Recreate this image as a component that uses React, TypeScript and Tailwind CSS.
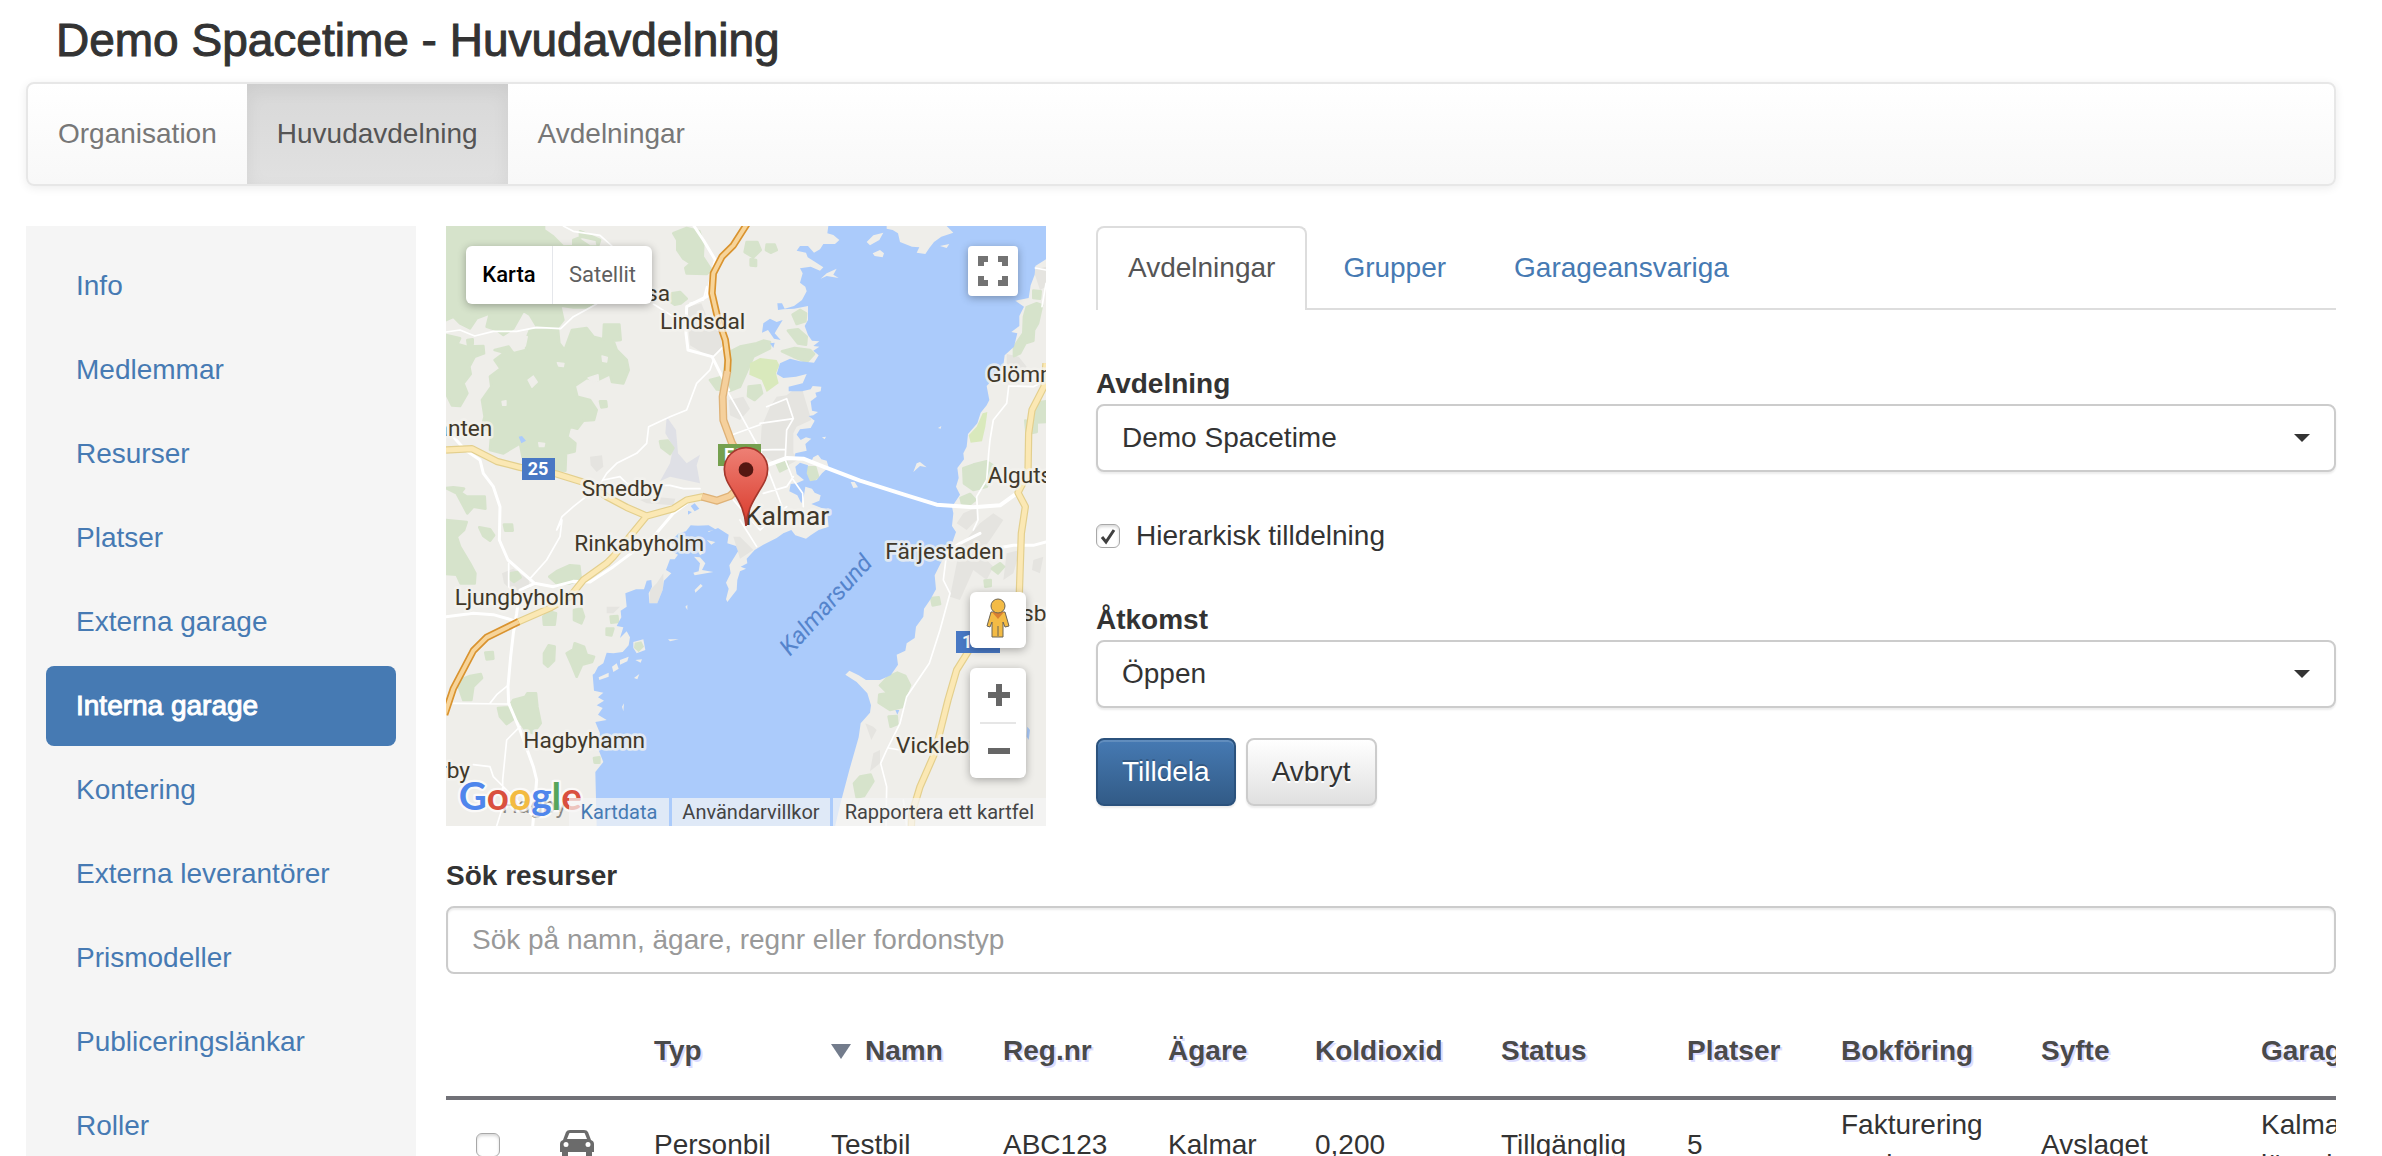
import { useState } from 'react';

interface Column {
  label: string;
  width: string;
  sorted?: boolean;
}

interface PlaceLabel {
  name: string;
  x: number;
  y: number;
  size?: number;
  anchor?: 'start' | 'end';
}

const navItems = ['Organisation', 'Huvudavdelning', 'Avdelningar'];

const sideItems = [
  'Info',
  'Medlemmar',
  'Resurser',
  'Platser',
  'Externa garage',
  'Interna garage',
  'Kontering',
  'Externa leverantörer',
  'Prismodeller',
  'Publiceringslänkar',
  'Roller',
];

const tabs = ['Avdelningar', 'Grupper', 'Garageansvariga'];

const columns: Column[] = [
  { label: 'Typ', width: 'w-[177px]' },
  { label: 'Namn', width: 'w-[172px]', sorted: true },
  { label: 'Reg.nr', width: 'w-[165px]' },
  { label: 'Ägare', width: 'w-[147px]' },
  { label: 'Koldioxid', width: 'w-[186px]' },
  { label: 'Status', width: 'w-[186px]' },
  { label: 'Platser', width: 'w-[154px]' },
  { label: 'Bokföring', width: 'w-[200px]' },
  { label: 'Syfte', width: 'w-[220px]' },
  { label: 'Garage', width: 'w-[160px]' },
];

const rows = [
  ['Personbil', 'Testbil', 'ABC123', 'Kalmar', '0,200', 'Tillgänglig', '5', 'Fakturering avgiven', 'Avslaget', 'Kalmar länssjukhus'],
];

const places: PlaceLabel[] = [
  { name: 'sa', x: 690, y: 243, anchor: 'end' },
  { name: 'Lindsdal', x: 660, y: 327 },
  { name: 'anten', x: 157, y: 648, anchor: 'end' },
  { name: 'Smedby', x: 425, y: 828 },
  { name: 'Kalmar', x: 914, y: 914, size: 80 },
  { name: 'Rinkabyholm', x: 403, y: 994 },
  { name: 'Ljungbyholm', x: 44, y: 1155 },
  { name: 'Hagbyhamn', x: 250, y: 1585 },
  { name: 'rby', x: 90, y: 1673, anchor: 'end' },
  { name: 'Glömminge', x: 1639, y: 487 },
  { name: 'Algutsrum', x: 1643, y: 790 },
  { name: 'Färjestaden', x: 1336, y: 1018 },
  { name: 'Vickleby', x: 1368, y: 1600 },
  { name: 'sby', x: 1746, y: 1203 },
];

const water =
  'M1165 18 L1162 40 L1180 45 L1198 60 L1185 72 L1150 72 L1140 88 L1122 98 L1104 78 L1080 78 L1070 92 L1098 98 L1103 112 L1122 124 L1150 142 L1140 152 L1112 140 L1080 145 L1088 160 L1080 188 L1096 200 L1100 214 L1086 240 L1062 258 L1034 266 L1026 250 L1012 250 L1014 270 L1030 268 L1062 266 L1104 258 L1104 300 L1094 318 L1104 345 L1116 362 L1138 364 L1120 378 L1138 380 L1120 392 L1136 406 L1122 428 L1080 424 L1050 416 L1020 430 L1010 462 L1030 474 L1068 470 L1100 462 L1088 490 L1046 500 L1046 514 L1086 514 L1112 508 L1118 498 L1144 500 L1142 514 L1126 518 L1130 530 L1112 544 L1116 572 L1134 576 L1120 586 L1106 588 L1124 602 L1112 624 L1080 628 L1070 644 L1082 660 L1098 652 L1114 656 L1096 672 L1100 692 L1066 700 L1064 712 L1090 716 L1112 728 L1120 712 L1134 704 L1144 718 L1160 722 L1166 742 L1146 760 L1130 780 L1110 784 L1100 760 L1104 736 L1080 728 L1066 740 L1070 762 L1092 780 L1070 790 L1052 792 L1048 814 L1072 826 L1084 850 L1092 826 L1096 800 L1116 806 L1124 818 L1142 826 L1138 842 L1114 852 L1160 870 L1166 920 L1136 930 L1112 946 L1098 956 L1066 946 L1054 930 L1030 940 L1010 954 L970 974 L944 990 L920 1016 L922 1030 L902 1040 L918 1046 L900 1054 L892 1080 L890 1110 L862 1146 L858 1138 L866 1106 L858 1088 L872 1060 L868 1036 L894 994 L888 978 L862 970 L866 944 L834 924 L806 936 L796 920 L752 916 L738 934 L716 940 L690 966 L706 974 L688 990 L714 1004 L704 1018 L690 1018 L678 1050 L694 1060 L672 1082 L668 1110 L652 1150 L628 1150 L626 1120 L636 1100 L634 1080 L620 1082 L612 1108 L588 1108 L556 1120 L560 1160 L542 1172 L544 1192 L530 1218 L550 1222 L540 1254 L560 1234 L570 1252 L566 1276 L548 1296 L520 1300 L500 1298 L490 1330 L474 1340 L464 1360 L458 1364 L462 1412 L490 1418 L474 1432 L492 1442 L470 1456 L488 1464 L474 1484 L500 1500 L466 1506 L480 1540 L472 1580 L490 1626 L466 1656 L470 1820 L1185 1820 L1200 1756 L1228 1650 L1256 1552 L1262 1510 L1290 1478 L1293 1456 L1282 1420 L1250 1386 L1216 1364 L1228 1352 L1256 1366 L1278 1380 L1320 1380 L1352 1366 L1374 1334 L1370 1304 L1396 1292 L1400 1270 L1424 1254 L1428 1220 L1450 1190 L1452 1166 L1470 1140 L1488 1108 L1484 1066 L1502 1030 L1520 1000 L1536 970 L1548 936 L1536 918 L1540 880 L1536 860 L1560 824 L1548 800 L1556 774 L1552 744 L1572 718 L1570 700 L1580 680 L1584 642 L1612 610 L1622 578 L1640 556 L1648 540 L1640 498 L1662 474 L1690 436 L1694 406 L1722 380 L1732 340 L1714 336 L1738 318 L1738 288 L1752 260 L1726 242 L1766 234 L1772 196 L1784 164 L1786 138 L1818 118 L1818 18 L1520 18 L1540 38 L1504 50 L1482 66 L1468 84 L1456 102 L1430 98 L1438 82 L1416 80 L1380 66 L1374 40 L1358 30 L1340 26 L1340 18 Z';

const forest =
  'M18 18 L312 18 L312 30 L340 50 L370 80 L400 78 L410 70 L440 90 L470 90 L480 60 L440 42 L420 34 L420 60 L450 80 L460 250 L440 262 L400 262 L360 256 L370 300 L350 325 L290 318 L270 285 L250 272 L240 290 L220 325 L190 345 L170 330 L140 320 L150 280 L110 295 L90 325 L60 310 L40 290 L18 300 Z M400 60 L425 50 L470 60 L474 80 L400 80 Z M18 345 L60 355 L52 372 L80 380 L130 378 L132 400 L104 410 L88 440 L92 462 L70 490 L82 520 L60 558 L36 556 L18 520 Z M270 330 L354 330 L358 370 L374 390 L396 330 L440 324 L460 350 L490 358 L492 314 L538 314 L542 360 L520 362 L530 390 L560 420 L566 450 L550 490 L516 486 L510 462 L470 482 L440 474 L404 498 L412 530 L450 540 L470 570 L462 600 L430 602 L412 626 L390 620 L382 650 L406 670 L404 694 L378 700 L376 752 L344 750 L344 712 L248 712 L240 670 L190 700 L150 690 L154 640 L126 620 L134 590 L126 540 L154 500 L150 470 L182 446 L164 420 L194 398 L164 390 L206 380 L220 400 L258 390 L262 350 Z M250 690 L280 676 L320 700 L320 714 L262 714 Z M18 804 L50 820 L82 880 L100 860 L136 866 L134 830 L96 830 L80 830 L62 818 L72 806 L40 802 Z M18 900 L80 906 L72 930 L50 950 L60 980 L90 1030 L106 1060 L104 1090 L62 1090 L50 1064 L18 1062 Z M118 922 L150 928 L162 946 L150 962 L130 948 Z M192 914 L216 914 L218 932 L196 932 Z M700 40 L740 24 L778 34 L790 70 L788 110 L814 150 L800 162 L740 160 L736 144 L752 130 L730 116 L712 90 L712 60 Z M696 220 L720 216 L740 236 L722 250 L704 254 L684 240 Z M920 66 L952 66 L962 90 L940 112 L914 96 Z M980 74 L1004 74 L1010 90 L992 98 L978 90 Z M932 118 L948 120 L948 138 L932 136 Z M810 480 L850 470 L860 400 L900 380 L950 370 L970 362 L990 366 L990 385 L940 410 L900 500 L870 512 L830 508 Z M926 500 L960 496 L966 520 L944 540 L924 528 Z M1058 284 L1080 270 L1098 280 L1096 304 L1070 312 Z M1044 332 L1074 328 L1100 350 L1098 374 L1074 370 Z M1026 394 L1064 384 L1110 390 L1122 402 L1100 426 L1060 410 Z M1104 742 L1126 742 L1134 770 L1116 784 L1100 772 Z M1008 726 L1040 726 L1044 742 L1020 754 Z M1760 262 L1790 250 L1806 256 L1794 310 L1782 330 L1780 362 L1756 370 L1740 400 L1722 408 L1722 380 L1750 340 L1752 290 Z M1780 212 L1802 214 L1800 236 L1780 234 Z M1776 570 L1790 548 L1818 544 L1818 606 L1776 608 Z M1756 602 L1790 610 L1790 636 L1760 642 Z M1570 745 L1600 734 L1640 724 L1664 740 L1640 800 L1600 810 L1572 790 Z M1562 834 L1590 822 L1606 840 L1586 856 L1566 850 Z M1656 1046 L1680 1030 L1692 1040 L1674 1060 Z M1634 1082 L1652 1080 L1652 1098 L1636 1100 Z M1474 1134 L1496 1132 L1500 1152 L1478 1156 Z M1320 1396 L1345 1370 L1372 1358 L1396 1368 L1410 1396 L1396 1430 L1390 1460 L1350 1470 L1316 1448 L1318 1424 L1344 1420 Z M1346 1490 L1370 1488 L1372 1512 L1352 1520 Z M1242 1690 L1260 1670 L1292 1664 L1300 1684 L1272 1728 L1250 1732 Z M328 1070 L350 1054 L390 1036 L418 1038 L422 1076 L390 1090 L350 1090 Z M212 1060 L232 1056 L242 1072 L222 1086 L210 1076 Z M310 1190 L326 1174 L348 1180 L344 1214 L312 1214 Z M402 1170 L424 1166 L432 1190 L424 1210 L402 1200 Z M312 1300 L326 1276 L344 1280 L342 1322 L324 1340 L312 1330 Z M380 1300 L400 1288 L404 1270 L432 1280 L440 1304 L462 1310 L456 1326 L426 1334 L410 1370 L396 1336 Z M136 1298 L158 1296 L160 1316 L140 1318 Z M60 1380 L90 1368 L122 1362 L126 1374 L100 1400 L94 1440 L70 1440 L56 1400 Z M174 1464 L206 1462 L220 1440 L256 1430 L262 1420 L288 1420 L292 1460 L302 1510 L280 1540 L256 1530 L230 1490 L200 1512 L180 1490 Z M512 1190 L532 1188 L534 1206 L514 1208 Z M500 1226 L520 1226 L514 1246 L500 1244 Z M462 1614 L478 1612 L478 1628 L464 1628 Z M660 664 L684 662 L700 684 L690 702 L664 682 Z M480 544 L498 544 L500 560 L484 562 Z M82 360 L98 358 L98 372 L84 374 Z';

const clearings =
  'M264 480 L280 468 L292 486 L276 502 Z M186 544 L198 542 L198 556 L188 556 Z M444 474 L474 464 L476 482 L460 488 Z M352 428 L372 430 L370 440 L356 438 Z M486 408 L502 412 L500 426 L488 424 Z M296 668 L314 670 L312 680 L298 680 Z M230 345 L262 350 L256 378 L228 380 Z';

const urban =
  'M740 262 L784 250 L800 290 L840 330 L846 380 L820 410 L790 400 L750 376 Z M1010 530 L1040 526 L1086 490 L1090 520 L1114 600 L1070 620 L1060 640 L1060 700 L1080 716 L1036 740 L990 720 L960 700 L965 620 L990 560 Z M866 540 L910 530 L930 566 L900 600 L870 586 Z M450 710 L486 706 L490 740 L470 756 L452 736 Z M600 840 L640 830 L706 836 L700 856 L620 850 Z M186 1060 L220 1046 L266 1080 L270 1104 L220 1116 L192 1090 Z M630 1110 L650 1090 L670 1060 L670 1104 L652 1150 L628 1150 Z M1560 980 L1620 910 L1660 880 L1690 900 L1650 960 L1620 1000 L1660 1040 L1640 1080 L1600 1050 L1560 1140 L1530 1130 Z M1700 1000 L1740 990 L1720 1060 L1690 1080 Z M1700 402 L1736 410 L1760 440 L1740 490 L1696 490 L1700 440 Z M1570 880 L1610 862 L1610 900 L1580 930 L1550 910 Z M1780 150 L1818 140 L1818 200 L1800 210 Z M1780 1020 L1810 1010 L1800 1060 L1776 1050 Z M1300 1600 L1320 1590 L1320 1630 L1290 1654 Z M1276 1510 L1300 1520 L1310 1530 L1294 1560 Z M500 1160 L540 1160 L520 1180 L500 1180 Z M880 950 L900 950 L940 990 L900 1016 Z';

const airfield = 'M680 590 L708 630 L714 700 L740 730 L780 704 L770 736 L780 790 L690 770 L660 784 L690 730 L700 680 L676 640 Z';

const islets =
  'M1280 66 L1300 46 L1330 38 L1318 60 L1290 76 Z M1298 100 L1320 90 L1332 100 L1328 112 L1304 108 Z M1160 160 L1190 146 L1180 164 L1196 174 L1160 168 L1142 176 Z M1430 730 L1440 726 L1460 742 L1440 738 L1420 756 Z M1232 786 L1244 786 L1254 802 L1240 804 Z M1494 624 L1504 618 L1502 626 Z M1146 652 L1158 650 L1154 658 Z M1110 602 L1122 600 L1118 612 Z M580 1266 L610 1258 L616 1290 L590 1300 L580 1284 Z M476 1372 L506 1358 L506 1370 L478 1380 Z M516 1340 L530 1330 L536 1346 L520 1356 Z M540 1320 L566 1310 L562 1324 L540 1334 Z M582 1374 L598 1362 L592 1378 Z M684 1258 L716 1258 L690 1264 Z M760 1058 L776 1054 L780 1030 L762 1010 L780 1012 L796 1030 L786 1050 L820 1056 L764 1066 Z M764 1110 L782 1092 L788 1098 L766 1118 Z M736 1160 L742 1154 L742 1170 Z M546 1460 L552 1450 L550 1474 Z M586 1320 L606 1318 L602 1328 Z M800 960 L826 966 L814 974 Z M1500 78 L1528 72 L1520 84 Z M770 980 L790 1000 L780 1006 Z';

const ponds =
  'M970 310 L990 296 L1010 306 L1028 300 L1012 326 L1004 340 L1022 360 L1002 356 L984 330 L966 338 Z M990 370 L1004 368 L1000 384 Z M752 858 L764 850 L778 866 L764 874 Z M744 872 L756 876 L744 884 Z M752 918 L806 916 L830 930 L752 940 Z M236 650 L246 648 L258 662 L244 670 Z M1366 1470 L1378 1470 L1372 1484 Z M1762 1520 L1770 1530 L1766 1560 L1760 1550 Z';

const yellowRoads =
  'M18 690 L96 686 L170 724 L240 742 L350 762 L440 790 L500 830 L560 862 L620 888 L700 866 L740 840 L790 830 M620 888 L520 1010 L500 1030 L430 1080 L390 1130 L330 1164 L234 1206 M1818 430 L1812 500 L1776 570 L1766 640 L1764 760 L1734 818 L1756 860 L1744 940 L1742 1000 L1738 1120 M1600 1270 L1550 1350 L1524 1440 L1504 1520 L1484 1600 L1440 1700 L1416 1780 L1414 1820';

const motorway = 'M922 10 L880 76 L846 110 L820 160 L816 220 L832 290 L856 360 L864 420 L862 460 M236 1205 L140 1252 L100 1292 L40 1406 L14 1484';

const motorwayCity = 'M862 454 L848 530 L850 600 L876 670 L910 730 M786 830 L830 842 L870 828 L900 800';

const linkClass = 'text-[#467ab3] hover:underline';
const controlClass = 'absolute bg-white shadow-[0_2px_8px_rgba(0,0,0,0.3)]';
const fieldClass =
  'block h-[68px] w-full rounded-lg border-2 border-[#cccccc] bg-white px-6 text-[28px] leading-10 text-[#333333] outline-none';

function MapDrawing() {
  return (
    <svg viewBox="18 18 1800 1800" className="block h-full w-full" aria-hidden="true" fontFamily="Roboto, sans-serif">
      <defs>
        <linearGradient id="pin" x1="0" y1="0" x2="0" y2="1">
          <stop offset="0" stopColor="#ee8075" />
          <stop offset="1" stopColor="#d93a2b" />
        </linearGradient>
      </defs>
      <rect x="18" y="18" width="1800" height="1800" fill="#efeeea" />
      <path d={urban} fill="#e5e4e0" />
      <path d={airfield} fill="#dfe0e6" />
      <path d={forest} fill="#d6e3cb" stroke="#d6e3cb" strokeWidth="8" strokeLinejoin="round" />
      <path d={clearings} fill="#efeeea" stroke="#efeeea" strokeWidth="4" strokeLinejoin="round" />
      <path
        d="M930 430 L960 414 L1010 420 L1018 436 L1008 460 L1016 490 L980 516 L965 480 L928 464 Z M1610 620 L1628 580 L1642 576 L1636 620 L1626 664 L1592 668 L1586 646 Z"
        fill="#d9e9bc"
      />
      <path d={water} fill="#abcbfb" />
      <path d={ponds} fill="#abcbfb" />
      <path d={islets} fill="#efeeea" />
      <path d="M584 1268 L604 1264 L612 1280 L596 1296 L582 1284 Z" fill="#d6e3cb" />

      {/* minor roads */}
      <g fill="none" stroke="#ffffff" strokeLinejoin="round" strokeLinecap="round">
        <path
          strokeWidth="5"
          d="M370 18 L400 34 L480 46 L516 78 M18 336 L60 330 L104 348 L160 334 L230 334 L290 322 L362 326 L400 290 L470 252 M820 420 L810 450 L770 490 L740 570 L690 590 L626 620 L620 670 L590 700 L530 730 L500 760 L476 800 L400 860 L366 890 L350 930 L366 900 L360 950 L320 1020 L270 1076 M490 780 L540 770 L560 790 L620 796 L690 796 L730 806 L780 806 M860 510 L900 580 L960 690 L1000 790 L1030 870 M960 614 L860 650 M980 560 L1040 536 L1060 596 L1040 630 L1036 710 M960 610 L1060 596 M960 690 L1036 688 M970 820 L1040 800 L1060 770 M1036 720 L1060 780 L1088 820 L1090 860 M750 250 L790 240 L800 200 M640 252 L700 290 M860 370 L820 410 M206 1030 L206 1100 L230 1130 M40 1450 L210 1452 M150 1450 L170 1424 L204 1396 M240 1520 L200 1560 L188 1680 L188 1760 L170 1818 M100 1634 L150 1640 L160 1670 L230 1740 L280 1790 M1706 500 L1700 550 L1660 600 L1650 660 L1646 700 L1640 780 L1610 830 L1614 900 L1600 930 M1706 498 L1780 500 L1800 490 M1520 1000 L1510 1080 L1530 1120 L1500 1230 L1468 1330 L1400 1430 L1380 1510 L1340 1590 L1322 1630 L1340 1700 L1338 1818 M1345 1584 L1380 1590 M1806 260 L1818 190 M1786 144 L1818 150 M1390 1740 L1400 1818 M900 900 L950 980 M880 840 L960 930 L1040 860"
        />
        <path
          strokeWidth="9"
          d="M762 18 L790 60 L826 120 L800 230 L740 260 L738 340 L744 390 L816 410 L866 510 M30 640 L76 690 L120 720 L130 760 L160 800 L180 860 L178 960 L204 1020 L284 1090 L340 1100 L400 1084 L450 1086 L520 1040 L640 950 L700 880 L740 850 M284 1090 L240 1110 L230 1180 L220 1240 L212 1310 L204 1400 L206 1450 L240 1530 L280 1640 L290 1680 L278 1820 M18 1190 L100 1180 L160 1184 L230 1204 M1520 998 L1560 970 L1620 940 M1640 990 L1720 976 L1780 976 L1818 966"
        />
        <path strokeWidth="12" d="M980 736 L1040 714 L1090 716 L1150 740 L1260 782 L1400 826 L1490 854 L1600 862 L1680 856 L1730 820" />
      </g>

      {/* larger roads, casing first */}
      <g fill="none" strokeLinejoin="round">
        <path stroke="#e3cf8d" strokeWidth="22" d={yellowRoads} />
        <path stroke="#fbe8b4" strokeWidth="15" d={yellowRoads} />
        <path stroke="#d9932f" strokeWidth="22" d={motorway} />
        <path stroke="#dfb277" strokeWidth="24" d={motorwayCity} />
        <path stroke="#f7d499" strokeWidth="12" d={motorway} />
        <path stroke="#f5d09c" strokeWidth="16" d={motorwayCity} />
      </g>

      {/* road shields */}
      <g fontSize="54" fontWeight="700" fill="#ffffff">
        <rect x="246" y="714" width="99" height="66" fill="#4878c4" />
        <text x="263" y="766">25</text>
        <rect x="834" y="672" width="129" height="66" fill="#75a04f" />
        <text x="852" y="724">E22</text>
        <rect x="1548" y="1233" width="132" height="66" fill="#4878c4" />
        <text x="1566" y="1285">136</text>
      </g>

      <text x="185" y="1780" fontSize="68" fill="#8b8883">Hagby</text>
      <g fill="#40382a" stroke="#f4f3ef" strokeOpacity="0.75" strokeWidth="16" strokeLinejoin="round" paintOrder="stroke">
        {places.map(p => (
          <text key={p.name} x={p.x} y={p.y} fontSize={p.size ?? 68} textAnchor={p.anchor ?? 'start'}>
            {p.name}
          </text>
        ))}
      </g>
      <text x="1050" y="1310" fontSize="72" fontStyle="italic" fill="#5584cc" transform="rotate(-48 1050 1310)">
        Kalmarsund
      </text>

      <path
        d="M918 918 C914 868 896 842 878 812 C864 790 853 772 853 748 A65 65 0 0 1 983 748 C983 772 972 790 958 812 C940 842 922 868 918 918 Z"
        fill="url(#pin)"
        stroke="#a4372c"
        strokeWidth="5"
      />
      <circle cx="918" cy="749" r="22" fill="#541712" />

      <text x="56" y="1769" fontFamily="Lato, sans-serif" fontSize="116" fontWeight="700" stroke="#ffffff" strokeOpacity="0.7" strokeWidth="14" strokeLinejoin="round" paintOrder="stroke">
        <tspan fill="#4f86ec">G</tspan>
        <tspan fill="#d9503f">o</tspan>
        <tspan fill="#f3bb41">o</tspan>
        <tspan fill="#4f86ec">g</tspan>
        <tspan fill="#57a55a">l</tspan>
        <tspan fill="#d9503f">e</tspan>
      </text>
    </svg>
  );
}

function GarageMap() {
  return (
    <div className="relative h-[600px] w-[600px] shrink-0 overflow-hidden font-[Roboto,sans-serif]">
      <MapDrawing />
      <div className={`${controlClass} left-5 top-5 flex h-[58px] rounded-md text-[22px]`}>
        <button type="button" className="w-[86px] font-medium text-black">Karta</button>
        <button type="button" className="w-[100px] border-l border-gray-200 text-[#5f5f5f]">Satellit</button>
      </div>
      <button type="button" aria-label="Helskärm" className={`${controlClass} right-7 top-5 h-[50px] w-[50px] rounded-sm`}>
        <svg viewBox="0 0 50 50" fill="none" stroke="#737373" strokeWidth="6">
          <path d="M13 20 V13 H20 M30 13 H37 V20 M37 30 V37 H30 M20 37 H13 V30" />
        </svg>
      </button>
      <button type="button" aria-label="Street View" className={`${controlClass} right-5 top-[366px] h-14 w-14 rounded-md`}>
        <svg viewBox="0 0 56 56" fill="#f3bb45" stroke="#6b6455" strokeWidth="1">
          <path d="M21 20 H35 L39 34 L35 35 L33 30 V45 H22 V30 L20 35 L17 34 Z" strokeLinejoin="round" />
          <path d="M22 20 H34 L28 27 Z" fill="#d98032" stroke="none" />
          <path d="M28 34 V44" />
          <circle cx="28" cy="14" r="7" />
        </svg>
      </button>
      <div className={`${controlClass} right-5 top-[442px] flex w-14 flex-col items-center rounded-md`}>
        <button type="button" aria-label="Zooma in" className="h-[54px] w-14">
          <svg viewBox="0 0 56 54" stroke="#666666" strokeWidth="6">
            <path d="M18 27 H40 M29 16 V38" />
          </svg>
        </button>
        <div className="h-0.5 w-9 bg-[#e6e6e6]" />
        <button type="button" aria-label="Zooma ut" className="h-[54px] w-14">
          <svg viewBox="0 0 56 54" stroke="#666666" strokeWidth="6">
            <path d="M18 27 H40" />
          </svg>
        </button>
      </div>
      <div className="absolute bottom-0 right-0 flex gap-[3px] whitespace-nowrap text-[20px] leading-7 text-[#444444]">
        <a href="#kartdata" className="bg-[#f5f5f5]/70 px-3 text-[#467ab3]">Kartdata</a>
        <a href="#villkor" className="bg-[#f5f5f5]/70 px-[10px]">Användarvillkor</a>
        <a href="#kartfel" className="bg-[#f5f5f5]/70 px-3">Rapportera ett kartfel</a>
      </div>
    </div>
  );
}

function SelectField({ id, label, options }: { id: string; label: string; options: string[] }) {
  return (
    <div>
      <label htmlFor={id} className="block font-bold">{label}</label>
      <div className="relative">
        <select id={id} className={`${fieldClass} appearance-none shadow-[0_2px_2px_rgba(0,0,0,0.08)]`}>
          {options.map(o => (
            <option key={o}>{o}</option>
          ))}
        </select>
        <svg viewBox="0 0 16 8" className="pointer-events-none absolute right-[26px] top-[30px] h-2 w-4">
          <path d="M0 0 H16 L8 8 Z" fill="#333333" />
        </svg>
      </div>
    </div>
  );
}

function Checkbox({ id, checked, onChange, label }: { id: string; checked: boolean; onChange: (v: boolean) => void; label?: string }) {
  return (
    <span className="relative block h-6 w-6 shrink-0">
      <input
        id={id}
        type="checkbox"
        aria-label={label}
        checked={checked}
        onChange={e => onChange(e.target.checked)}
        className="block h-6 w-6 appearance-none rounded-[6px] border border-[#a8a8a8] bg-white shadow-[inset_0_2px_3px_rgba(0,0,0,0.15)]"
      />
      {checked && (
        <svg viewBox="0 0 24 24" className="pointer-events-none absolute inset-0" fill="none" stroke="#404040" strokeWidth="3">
          <path d="M6 13 L10 18 L18 6" />
        </svg>
      )}
    </span>
  );
}

function CarIcon() {
  return (
    <svg viewBox="0 0 34 30" className="block h-[30px] w-[34px]" fill="#6b6b6b">
      <path
        fillRule="evenodd"
        d="M10 0 H24 Q27 0 28 2 L31 10 Q34 11 34 14 V22 H32 V27 Q32 30 29 30 Q26 30 26 27 V22 H8 V27 Q8 30 5 30 Q2 30 2 27 V22 H0 V14 Q0 11 3 10 L6 2 Q7 0 10 0 Z M10 3 Q9 3 9 4 L7 9 H27 L25 4 Q25 3 24 3 Z M6 12 A2 2 0 1 0 6 17 A2 2 0 1 0 6 12 Z M28 12 A2 2 0 1 0 28 17 A2 2 0 1 0 28 12 Z"
      />
    </svg>
  );
}

export default function App() {
  const [hierarchical, setHierarchical] = useState(true);
  const [selected, setSelected] = useState(false);
  const [query, setQuery] = useState('');

  return (
    <div className="flex h-screen flex-col overflow-hidden bg-white pl-[26px] pr-[46px] font-['Liberation_Sans',Arial,sans-serif] text-[28px] leading-10 text-[#333333]">
      <h1 className="mb-[18px] mt-4 pl-[30px] text-[46px] leading-[48px] [-webkit-text-stroke:1px_#333333]">
        Demo Spacetime - Huvudavdelning
      </h1>

      <nav className="flex shrink-0 rounded-lg border-2 border-[#e7e7e7] bg-linear-to-b from-white to-[#f8f8f8] shadow-[0_2px_10px_rgba(0,0,0,0.08)]">
        {navItems.map(item => (
          <a
            key={item}
            href={`#${item.toLowerCase()}`}
            className={
              item === 'Huvudavdelning'
                ? 'bg-linear-to-b from-[#d8d8d8] to-[#e1e1e1] px-[30px] py-[30px] text-[#555555] shadow-[inset_0_6px_18px_rgba(0,0,0,0.06)]'
                : 'px-[30px] py-[30px] text-[#777777]'
            }
          >
            {item}
          </a>
        ))}
      </nav>

      <div className="mt-10 flex min-h-0 flex-1 gap-[30px]">
        <aside className="w-[390px] shrink-0 overflow-hidden bg-[#f5f5f5] p-5">
          <ul className="space-y-1">
            {sideItems.map(item => (
              <li key={item}>
                <a
                  href={`#${item.toLowerCase()}`}
                  className={
                    item === 'Interna garage'
                      ? 'block rounded-lg bg-[#467ab3] px-[30px] py-5 text-white [-webkit-text-stroke:1px_white]'
                      : 'block px-[30px] py-5 text-[#467ab3]'
                  }
                >
                  {item}
                </a>
              </li>
            ))}
          </ul>
        </aside>

        <main className="min-w-0 flex-1">
          <div className="flex gap-[50px]">
            <GarageMap />

            <div className="min-w-0 flex-1">
              <div role="tablist" className="flex gap-1 border-b-2 border-[#dddddd]">
                {tabs.map((tab, i) => (
                  <button
                    key={tab}
                    type="button"
                    role="tab"
                    aria-selected={i === 0}
                    className={
                      i === 0
                        ? '-mb-0.5 rounded-t-lg border-2 border-b-0 border-[#dddddd] bg-white px-[30px] pb-[22px] pt-5 text-[#555555]'
                        : `border-2 border-b-0 border-transparent px-[30px] py-5 ${linkClass}`
                    }
                  >
                    {tab}
                  </button>
                ))}
              </div>

              <form className="mt-[54px]" onSubmit={e => e.preventDefault()}>
                <SelectField id="avdelning" label="Avdelning" options={['Demo Spacetime']} />
                <div className="my-11 flex items-center gap-4">
                  <Checkbox id="hierarkisk" checked={hierarchical} onChange={setHierarchical} />
                  <label htmlFor="hierarkisk">Hierarkisk tilldelning</label>
                </div>
                <SelectField id="atkomst" label="Åtkomst" options={['Öppen', 'Stängd']} />
                <div className="mt-[30px] flex gap-[10px]">
                  <button
                    type="submit"
                    className="h-[68px] rounded-lg border-2 border-[#2b527d] bg-linear-to-b from-[#467ab3] to-[#325b87] px-6 text-white shadow-[inset_0_2px_0_rgba(255,255,255,0.15),0_2px_2px_rgba(0,0,0,0.08)] [text-shadow:0_-2px_0_rgba(0,0,0,0.2)]"
                  >
                    Tilldela
                  </button>
                  <button
                    type="button"
                    className="h-[68px] rounded-lg border-2 border-[#cccccc] bg-linear-to-b from-white to-[#e0e0e0] px-6 shadow-[0_2px_2px_rgba(0,0,0,0.08)] [text-shadow:0_2px_0_white]"
                  >
                    Avbryt
                  </button>
                </div>
              </form>
            </div>
          </div>

          <div className="mt-[30px]">
            <label htmlFor="search" className="mb-[10px] block font-bold">Sök resurser</label>
            <input
              id="search"
              type="text"
              value={query}
              onChange={e => setQuery(e.target.value)}
              placeholder="Sök på namn, ägare, regnr eller fordonstyp"
              className={`${fieldClass} shadow-[inset_0_2px_2px_rgba(0,0,0,0.075)] placeholder:text-[#999999]`}
            />
          </div>

          <div className="mt-10 overflow-hidden">
            <table className="w-[1959px] table-fixed border-separate border-spacing-0 text-left">
              <thead>
                <tr className="text-[#4a4a4a] [text-shadow:2px_2px_0_#dcdcff]">
                  <th className="w-[98px] border-b-4 border-[#717177]" />
                  <th className="w-[94px] border-b-4 border-[#717177]" />
                  {columns.map(col => (
                    <th key={col.label} className={`${col.width} border-b-4 border-[#717177] pb-[25px] pl-4 pt-[17px] font-bold`}>
                      <span className="flex items-center">
                        {col.sorted && (
                          <svg viewBox="0 0 20 15" className="mr-[14px] h-[15px] w-5">
                            <path d="M0 0 H20 L10 15 Z" fill="#737c8c" />
                          </svg>
                        )}
                        {col.label}
                      </span>
                    </th>
                  ))}
                </tr>
              </thead>
              <tbody>
                {rows.map(row => (
                  <tr key={row[2]}>
                    <td className="pl-[30px]">
                      <Checkbox id="row-1" label="Välj Testbil" checked={selected} onChange={setSelected} />
                    </td>
                    <td className="pl-4">
                      <CarIcon />
                    </td>
                    {row.map(cell => (
                      <td key={cell} className="py-[5px] pl-4">{cell}</td>
                    ))}
                  </tr>
                ))}
              </tbody>
            </table>
          </div>
        </main>
      </div>
    </div>
  );
}
